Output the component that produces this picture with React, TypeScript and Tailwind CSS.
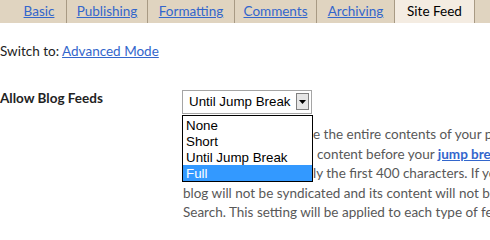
import React from "react";

const tabs = [
  { label: "Basic", w: "w-[55px]" },
  { label: "Publishing", w: "w-[81px]" },
  { label: "Formatting", w: "w-[87px]" },
  { label: "Comments", w: "w-[82px]" },
  { label: "Archiving", w: "w-[78px]" },
];

export default function App() {
  return (
    <div className="w-[490px] h-[226px] overflow-hidden bg-white text-[13.5px] text-[#222] font-['Lato','DejaVu_Sans',sans-serif]">
      <div className="flex h-[23px] bg-[#e0d4c0] pl-[12px] whitespace-nowrap">
        {tabs.map((t) => (
          <div
            key={t.label}
            className={`${t.w} shrink-0 flex items-center justify-center border-r border-[#a89a84]`}
          >
            <a href="#" className="text-[#3366cc] underline">
              {t.label}
            </a>
          </div>
        ))}
        <div className="w-[80px] shrink-0 flex items-center justify-center border-r border-[#a89a84] bg-[#f4ece2] text-black">
          Site Feed
        </div>
        <div className="w-[80px] shrink-0 flex items-center justify-center">
          <a href="#" className="text-[#3366cc] underline">
            Email
          </a>
        </div>
      </div>

      <div className="mt-[19px] leading-[18px] whitespace-nowrap">
        Switch to:{" "}
        <a href="#" className="text-[#3366cc] underline">
          Advanced Mode
        </a>
      </div>

      <div className="flex mt-[31px]">
        <div className="w-[182px] shrink-0 font-bold leading-[18px] mt-[-2px]">Allow Blog Feeds</div>
        <div className="flex flex-col mt-[-1px]">
          <div className="relative">
            <div className="relative w-[130px] h-[24px] border border-[#a5a5a5] bg-white flex items-center pl-[6px] font-['Liberation_Sans',Arial,sans-serif] text-[13.33px] text-black">
              Until Jump Break
              <div className="absolute right-[2px] top-[2px] w-[13px] h-[17px] border border-[#7f7f7f] bg-[#e6e6e6] flex items-center justify-center">
                <svg width="7" height="4" viewBox="0 0 7 4">
                  <path d="M0 0h7L3.5 4z" fill="#000" />
                </svg>
              </div>
            </div>
            <div className="absolute left-0 top-[25px] w-[131px] border border-black bg-white pt-[1px] font-['Liberation_Sans',Arial,sans-serif] text-[13.33px] text-black z-10">
              {["None", "Short", "Until Jump Break"].map((o) => (
                <div key={o} className="h-[16px] leading-[17px] pl-[3px]">
                  {o}
                </div>
              ))}
              <div className="h-[16px] leading-[17px] pl-[3px] bg-[#3399ff] text-white">Full</div>
            </div>
          </div>
          <p className="mt-[11px] leading-[19.5px] text-[#585858] whitespace-nowrap pl-[1px]">
            <span className="inline-block w-[130px] overflow-hidden align-bottom">Select Full to syndicat</span>e the entire contents of your post.
            <br />
            <span className="inline-block w-[134px] overflow-hidden align-bottom">Jump Break: the</span>content before your{" "}
            <a href="#" className="text-[#3366cc] underline font-bold">jump break</a>, if present.
            <br />
            <span className="inline-block w-[130px] overflow-hidden align-bottom">Short is approximate</span>ly the first 400 characters. If you select None, your
            <br />
            blog will not be syndicated and its content will not be searchable by Google Blog
            <br />
            Search. This setting will be applied to each type of feed.
          </p>
        </div>
      </div>
    </div>
  );
}
